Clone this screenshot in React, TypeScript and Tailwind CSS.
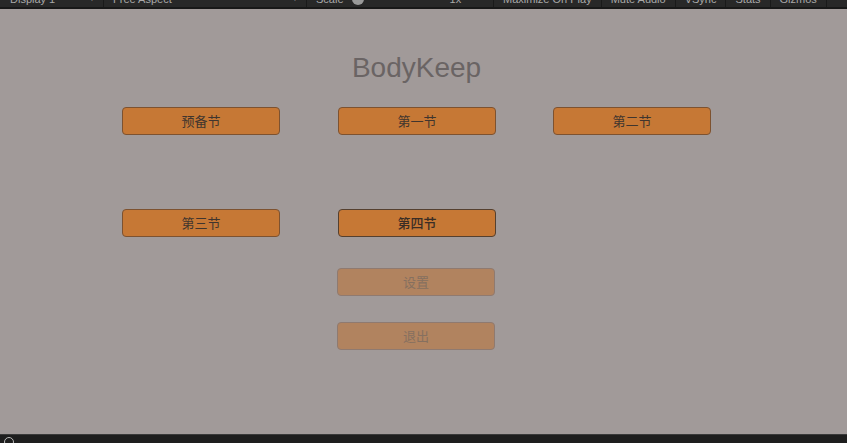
import React from "react";

const cjk = { fontFamily: '"Noto Sans CJK SC", "Noto Sans", sans-serif' };

function Btn({ label, faded, strong }: { label: string; faded?: boolean; strong?: boolean }) {
  if (faded) {
    return (
      <div
        className="flex h-[28px] w-[158px] items-center justify-center rounded-[4px] border border-[#8f7a70] bg-[#b1835f] text-[13px] text-[#86705f]"
        style={cjk}
      >
        {label}
      </div>
    );
  }
  return (
    <div
      className={
        "flex h-[28px] w-[158px] items-center justify-center rounded-[4px] border bg-[#c67835] text-[13px] " +
        (strong ? "border-[#55402f] text-[#3a2d25] font-medium" : "border-[#7d5230] text-[#40352e]")
      }
      style={cjk}
    >
      {label}
    </div>
  );
}

function Sep() {
  return <div className="mx-[3px] h-full w-[1px] bg-[#1a1a1a]" />;
}

export default function App() {
  const mono = { fontFamily: '"Liberation Sans", Arial, sans-serif' };
  return (
    <div className="flex h-[443px] w-[847px] flex-col overflow-hidden bg-[#1e1e1e]" style={mono}>
      {/* top toolbar (clipped) */}
      <div className="h-[7px] overflow-hidden bg-[#282828]">
        <div className="-mt-[9px] flex h-[16px] items-center text-[11px] text-[#a8a8a8]">
          <div className="flex w-[100px] items-center justify-between pl-[10px] pr-[4px]">
            <span>Display 1</span>
            <span className="text-[8px]">▼</span>
          </div>
          <Sep />
          <div className="flex w-[196px] items-center justify-between pl-[6px] pr-[4px]">
            <span>Free Aspect</span>
            <span className="text-[8px]">▼</span>
          </div>
          <Sep />
          <div className="flex w-[180px] items-center pl-[6px]">
            <span>Scale</span>
            <div className="relative ml-[8px] h-[2px] w-[86px] bg-[#555]">
              <div className="absolute -top-[5px] left-[0px] h-[12px] w-[12px] rounded-full bg-[#999]" />
            </div>
            <span className="ml-[12px]">1x</span>
          </div>
          <Sep />
          <span className="px-[6px]">Maximize On Play</span>
          <Sep />
          <span className="px-[6px]">Mute Audio</span>
          <Sep />
          <span className="px-[6px]">VSync</span>
          <Sep />
          <span className="px-[6px]">Stats</span>
          <Sep />
          <span className="px-[6px]">Gizmos</span>
          <Sep />
        </div>
      </div>
      <div className="h-[2px] bg-[#181818]" />

      {/* game view */}
      <div className="flex h-[427px] flex-col bg-[#a19a99]">
        <div className="mt-[43px] text-center text-[28px] leading-[32px] text-[#6a6464]">
          <span className="relative left-[-7px]">BodyKeep</span>
        </div>
        <div className="mt-[23px] grid grid-cols-[158px_158px_158px] gap-x-[58px] pl-[122px]">
          <Btn label="预备节" />
          <Btn label="第一节" />
          <div className="-ml-[1px]">
            <Btn label="第二节" />
          </div>
        </div>
        <div className="mt-[74px] grid grid-cols-[158px_158px] gap-x-[58px] pl-[122px]">
          <Btn label="第三节" />
          <Btn label="第四节" strong />
        </div>
        <div className="mt-[31px] pl-[337px]">
          <Btn label="设置" faded />
        </div>
        <div className="mt-[26px] pl-[337px]">
          <Btn label="退出" faded />
        </div>
      </div>

      {/* bottom bar */}
      <div className="h-[1px] bg-[#3a3a3a]" />
      <div className="flex h-[8px] items-start overflow-hidden bg-[#1e1e1e] pl-[4px]">
        <div className="mt-[2px] h-[10px] w-[10px] rounded-full border border-[#bbbbbb]" />
      </div>
    </div>
  );
}
